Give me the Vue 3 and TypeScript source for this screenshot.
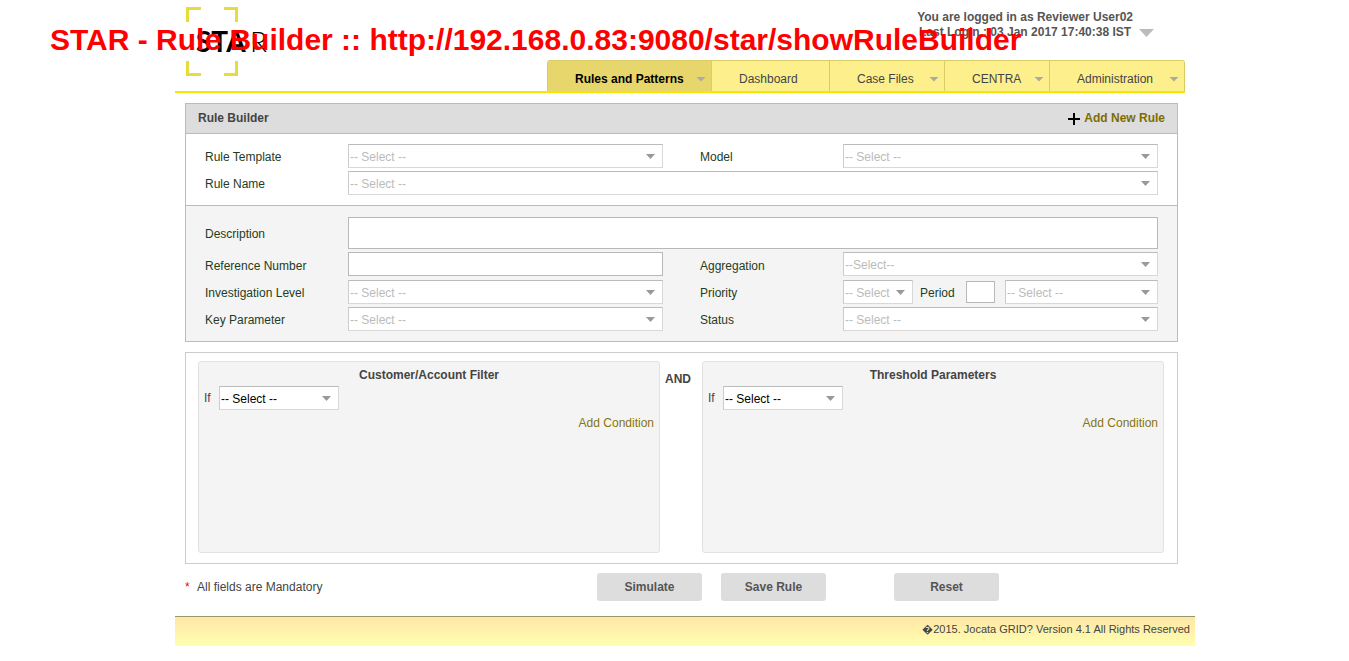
<script setup lang="ts">
import { ref } from 'vue'

interface Tab {
  label: string
  name: string
  menu: boolean
}

const tabs: Tab[] = [
  { label: 'Rules and Patterns', name: 'rules', menu: true },
  { label: 'Dashboard', name: 'dashboard', menu: false },
  { label: 'Case Files', name: 'cases', menu: true },
  { label: 'CENTRA', name: 'centra', menu: true },
  { label: 'Administration', name: 'admin', menu: true },
]
const active = ref('rules')
const filters = [
  { id: 'customer', title: 'Customer/Account Filter' },
  { id: 'threshold', title: 'Threshold Parameters' },
]
const description = ref('')
const reference = ref('')
const period = ref('')
</script>

<template>
  <h1 class="banner">STAR - Rule Builder :: http://192.168.0.83:9080/star/showRuleBuilder</h1>
  <div class="page">
    <header class="top">
      <svg class="logo" viewBox="0 0 84 70" width="84" height="70" role="img" aria-label="STAR">
        <g fill="none" stroke="#e8dc3c" stroke-width="3">
          <path d="M1.5 15V1.5H15M38 1.5H50.500V15M1.500 54V67.500H15M38 67.500H50.500V54" />
        </g>
        <text x="10" y="45" class="logo-bold">STA</text>
        <text x="64" y="45" class="logo-thin">R</text>
      </svg>
      <div class="side">
        <div class="user">
          <p>You are logged in as Reviewer User02<br />Last Login : 03 Jan 2017 17:40:38 IST</p>
          <button type="button" class="user-menu" aria-label="User menu"></button>
        </div>
        <nav class="tabs">
          <a
            v-for="t in tabs"
            :key="t.name"
            href="#"
            :class="['tab', t.name, { active: active === t.name }]"
            @click.prevent="active = t.name"
          >
            <span>{{ t.label }}</span>
            <i v-if="t.menu" class="caret"></i>
          </a>
        </nav>
      </div>
    </header>

    <main class="content">
      <section class="panel">
        <div class="panel-head">
          <h2>Rule Builder</h2>
          <a href="#" class="add">
            <svg width="12" height="12" viewBox="0 0 12 12" aria-hidden="true">
              <path d="M6 0V12M0 6H12" stroke="#000" stroke-width="2" />
            </svg>
            Add New Rule
          </a>
        </div>
        <div class="fields">
          <label for="template">Rule Template</label>
          <div class="select"><select id="template"><option>-- Select --</option></select></div>
          <label for="model" class="second">Model</label>
          <div class="select"><select id="model"><option>-- Select --</option></select></div>
          <label for="name">Rule Name</label>
          <div class="select wide"><select id="name"><option>-- Select --</option></select></div>
        </div>
        <div class="fields shaded">
          <label for="description">Description</label>
          <textarea id="description" v-model="description" class="wide"></textarea>
          <label for="reference">Reference Number</label>
          <input id="reference" v-model="reference" type="text" />
          <label for="aggregation" class="second">Aggregation</label>
          <div class="select"><select id="aggregation"><option>--Select--</option></select></div>
          <label for="level">Investigation Level</label>
          <div class="select"><select id="level"><option>-- Select --</option></select></div>
          <label for="priority" class="second">Priority</label>
          <div class="split">
            <div class="select narrow"><select id="priority"><option>-- Select --</option></select></div>
            <label for="period">Period</label>
            <input id="period" v-model="period" type="text" />
            <div class="select"><select aria-label="Period unit"><option>-- Select --</option></select></div>
          </div>
          <label for="key">Key Parameter</label>
          <div class="select"><select id="key"><option>-- Select --</option></select></div>
          <label for="status" class="second">Status</label>
          <div class="select"><select id="status"><option>-- Select --</option></select></div>
        </div>
      </section>

      <section class="conditions">
        <template v-for="(f, i) in filters" :key="f.id">
          <strong v-if="i > 0" class="and">AND</strong>
          <div class="filter">
            <h3>{{ f.title }}</h3>
            <div class="cond">
              <label :for="f.id">If</label>
              <div class="select dark"><select :id="f.id"><option>-- Select --</option></select></div>
            </div>
            <a href="#" class="more">Add Condition</a>
          </div>
        </template>
      </section>

      <div class="actions">
        <p><span class="star">*</span>All fields are Mandatory</p>
        <button type="button">Simulate</button>
        <button type="button">Save Rule</button>
        <button type="button" class="reset">Reset</button>
      </div>
    </main>

    <footer class="foot">&#xFFFD;2015. Jocata GRID? Version 4.1 All Rights Reserved</footer>
  </div>
</template>

<style>
body {
  margin: 0;
  background: #fff;
}
</style>

<style scoped>
* {
  box-sizing: border-box;
}
h1,
h2,
h3,
p {
  margin: 0;
}
a {
  text-decoration: none;
}
.banner {
  position: absolute;
  z-index: 2;
  top: 22px;
  left: 50px;
  font: bold 30px/36px "Liberation Sans", Arial, sans-serif;
  color: #f00;
  white-space: nowrap;
  pointer-events: none;
}
.page {
  max-width: 1041px;
  margin: 0 auto;
  padding-left: 21px;
  font: 12px/15px "Liberation Sans", Arial, sans-serif;
  color: #444;
}
.page input,
.page textarea,
.page select,
.page button {
  font: inherit;
}
.top {
  display: flex;
  justify-content: space-between;
  margin-right: 10px;
  border-bottom: 2px solid #f5e800;
}
.logo {
  margin: 7px 0 0 11px;
}
.logo-bold {
  font: bold 28px Lato, sans-serif;
}
.logo-thin {
  font: 300 28px Lato, sans-serif;
}
.side {
  display: flex;
  flex-direction: column;
  align-items: flex-end;
}
.user {
  display: flex;
  align-items: flex-end;
  gap: 6px;
  height: 60px;
  padding: 0 31px 20px 0;
  font-weight: bold;
  text-align: center;
  color: #555;
}
.user-menu {
  width: 15px;
  height: 8px;
  margin-bottom: 3px;
  padding: 0;
  border: 0;
  background: #bbb;
  clip-path: polygon(0 0, 100% 0, 50% 100%);
}
.tabs {
  display: flex;
  border: 1px solid #d9cd68;
  border-bottom: 0;
  border-radius: 3px 3px 0 0;
  overflow: hidden;
}
.tab {
  display: flex;
  align-items: center;
  justify-content: space-between;
  height: 30px;
  padding: 6px 5px 0 27px;
  background: #fdf08c;
  color: #444;
}
.tab + .tab {
  border-left: 1px solid #d9cd68;
}
.tab.active {
  background: #e6d66c;
  color: #000;
  font-weight: bold;
}
.tab.rules {
  width: 163px;
}
.tab.dashboard {
  width: 118px;
}
.tab.cases {
  width: 115px;
}
.tab.centra {
  width: 105px;
}
.tab.admin {
  width: 135px;
}
.caret {
  width: 10px;
  height: 5px;
  background: #aaa;
  clip-path: polygon(0 0, 100% 0, 50% 100%);
}
.content {
  margin: 10px 17px 0 10px;
}
.panel {
  border: 1px solid #bbb;
}
.panel-head {
  display: flex;
  align-items: center;
  justify-content: space-between;
  height: 30px;
  padding: 0 12px;
  border-bottom: 1px solid #bbb;
  background: #ddd;
}
.panel-head h2 {
  font: inherit;
  font-weight: bold;
}
.add {
  display: flex;
  align-items: center;
  gap: 4px;
  font-weight: bold;
  color: #7f6c00;
}
.fields {
  display: grid;
  grid-template-columns: 143px minmax(0, 1fr) 180px minmax(0, 1fr);
  gap: 3px 0;
  padding: 10px 19px;
}
.fields label {
  align-self: center;
  padding-top: 2px;
  line-height: 22px;
  color: #243c24;
}
.fields .second {
  padding-left: 37px;
}
.fields.shaded {
  grid-template-rows: 32px 25px 24px 24px;
  padding-top: 11px;
  border-top: 1px solid #bbb;
  background: #f4f4f4;
}
.wide {
  grid-column: span 3;
}
.page input,
.page textarea {
  width: 100%;
  height: 24px;
  padding: 2px;
  border: 1px solid #b8b8b8;
  border-radius: 0;
  background: #fff;
  resize: none;
}
.page textarea {
  display: block;
  height: 32px;
}
.select {
  position: relative;
  height: 24px;
}
.select::after {
  content: "";
  position: absolute;
  top: 10px;
  right: 8px;
  width: 9px;
  height: 5px;
  background: #999;
  clip-path: polygon(0 0, 100% 0, 50% 100%);
  pointer-events: none;
}
.select select {
  appearance: none;
  display: block;
  width: 100%;
  height: 24px;
  padding: 2px 22px 0 1px;
  border: 1px solid #d8d8d8;
  border-top-color: #bbb;
  border-left-color: #ccc;
  border-radius: 0;
  background: #fff;
  color: #bbb;
}
.select.dark select {
  color: #000;
}
.split {
  display: flex;
}
.split .select {
  flex: 1;
}
.split .narrow {
  flex: 0 0 70px;
}
.split label {
  width: 53px;
  padding-left: 7px;
}
.page .split input {
  flex: none;
  width: 29px;
  height: 22px;
  margin: 1px 10px 0 0;
}
.conditions {
  display: grid;
  grid-template-columns: minmax(0, 1fr) 42px minmax(0, 1fr);
  margin-top: 10px;
  padding: 8px 13px 10px 12px;
  border: 1px solid #ccc;
}
.and {
  padding: 11px 0 0 5px;
}
.filter {
  display: flex;
  flex-direction: column;
  min-height: 192px;
  padding: 6px 5px;
  border: 1px solid #e2e2e2;
  border-radius: 3px;
  background: #f4f4f4;
}
.filter h3 {
  font: inherit;
  font-weight: bold;
  text-align: center;
}
.cond {
  display: flex;
  align-items: center;
  margin-top: 3px;
}
.cond label {
  width: 15px;
}
.cond .select {
  width: 120px;
}
.more {
  align-self: flex-end;
  margin-top: 6px;
  color: #857415;
}
.actions {
  display: flex;
  align-items: center;
  margin-top: 9px;
}
.actions p {
  width: 412px;
}
.star {
  display: inline-block;
  width: 12px;
  color: #f00;
}
.actions button {
  width: 105px;
  height: 28px;
  padding: 0;
  margin-right: 19px;
  border: 0;
  border-radius: 3px;
  background: #ddd;
  color: #555;
  font-weight: bold;
}
.actions .reset {
  margin-left: 49px;
}
.foot {
  height: 30px;
  margin-top: 15px;
  padding: 5px 5px 0;
  border-top: 1px solid #93996a;
  background: linear-gradient(#ffe6a6, #ffffb0);
  font-size: 11px;
  text-align: right;
}
</style>
